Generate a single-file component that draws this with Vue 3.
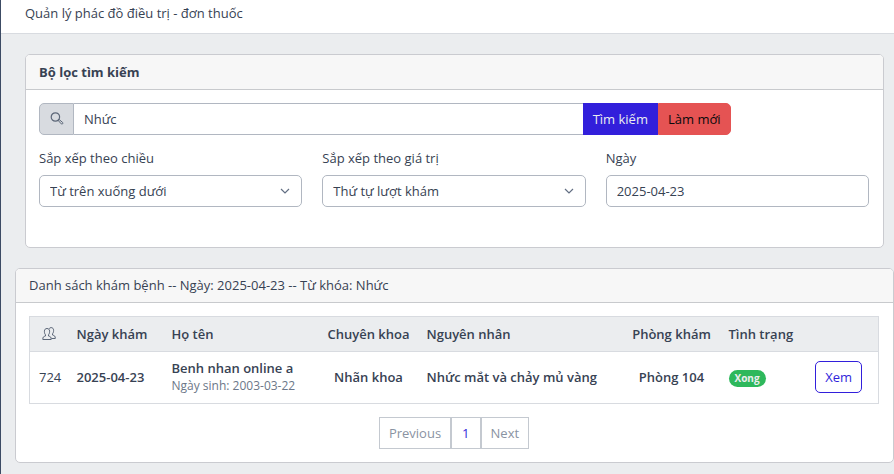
<script setup>
import { ref } from 'vue'

const keyword = ref('Nhức')
const direction = ref('desc')
const sortBy = ref('order')
const date = ref('2025-04-23')

const visits = [
  {
    id: 724,
    date: '2025-04-23',
    name: 'Benh nhan online a',
    birthday: '2003-03-22',
    specialty: 'Nhãn khoa',
    reason: 'Nhức mắt và chảy mủ vàng',
    room: 'Phòng 104',
    status: 'Xong',
  },
]
</script>

<template>
  <div class="page">
    <header class="topbar">Quản lý phác đồ điều trị - đơn thuốc</header>
    <main class="content">
      <section class="card filter">
        <h2 class="card-header strong">Bộ lọc tìm kiếm</h2>
        <form class="filter-body" @submit.prevent>
          <div class="search">
            <label class="addon" for="keyword" aria-label="Từ khóa">
              <svg width="14" height="14" viewBox="0 0 14 14" fill="none" stroke="currentColor">
                <circle cx="5.4" cy="5" r="4.2" stroke-width="1.2" />
                <path d="M8.1 8.200l.9-.8 3.700 3.100c.8.8-.5 2.200-1.400 1.400L8 8.300" />
              </svg>
            </label>
            <input id="keyword" v-model="keyword" class="control" type="text" />
            <button class="btn primary" type="submit">Tìm kiếm</button>
            <button class="btn danger" type="reset">Làm mới</button>
          </div>
          <div class="fields">
            <div class="field">
              <label for="direction">Sắp xếp theo chiều</label>
              <div class="select">
                <select id="direction" v-model="direction" class="control">
                  <option value="desc">Từ trên xuống dưới</option>
                  <option value="asc">Từ dưới lên trên</option>
                </select>
                <svg class="chevron" width="10" height="10" viewBox="0 0 10 10" fill="none" stroke="currentColor">
                  <path d="M1 3l4 4 4-4" stroke-width="1.2" />
                </svg>
              </div>
            </div>
            <div class="field">
              <label for="sort-by">Sắp xếp theo giá trị</label>
              <div class="select">
                <select id="sort-by" v-model="sortBy" class="control">
                  <option value="order">Thứ tự lượt khám</option>
                  <option value="date">Ngày khám</option>
                </select>
                <svg class="chevron" width="10" height="10" viewBox="0 0 10 10" fill="none" stroke="currentColor">
                  <path d="M1 3l4 4 4-4" stroke-width="1.2" />
                </svg>
              </div>
            </div>
            <div class="field">
              <label for="date">Ngày</label>
              <input id="date" v-model="date" class="control" type="text" />
            </div>
          </div>
        </form>
      </section>

      <section class="card results">
        <h2 class="card-header">Danh sách khám bệnh -- Ngày: {{ date }} -- Từ khóa: {{ keyword }}</h2>
        <div class="results-body">
          <table>
            <colgroup>
              <col class="w-id" />
              <col class="w-date" />
              <col class="w-name" />
              <col class="w-specialty" />
              <col />
              <col class="w-room" />
              <col class="w-status" />
              <col class="w-action" />
            </colgroup>
            <thead>
              <tr>
                <th class="center">
                  <svg class="people" width="14" height="14" viewBox="0 0 14 14" fill="none" stroke="currentColor" stroke-linejoin="round">
                    <path d="M.8 12.500c0-2.600.6-2.900 2.700-3.500V7.800C2.600 6.800 2.400 5.800 2.400 4.200 2.400 2.500 3.500 1.500 5 1.500s2.600 1 2.600 2.700c0 1.600-.2 2.600-1.100 3.600V9c2.100.6 2.700.9 2.700 3.500z" />
                    <path d="M7.200 1.600C7.600 1 8.300.6 9.100.6c1.500 0 2.500 1 2.500 2.700 0 1.500-.2 2.500-1.100 3.500V8c2.100.7 2.800 1 2.800 3.500H9.500" />
                  </svg>
                </th>
                <th>Ngày khám</th>
                <th>Họ tên</th>
                <th class="center">Chuyên khoa</th>
                <th>Nguyên nhân</th>
                <th class="center">Phòng khám</th>
                <th>Tình trạng</th>
                <th></th>
              </tr>
            </thead>
            <tbody>
              <tr v-for="visit in visits" :key="visit.id">
                <td class="id">{{ visit.id }}</td>
                <td>{{ visit.date }}</td>
                <td>
                  <div class="name">{{ visit.name }}</div>
                  <div class="birthday">Ngày sinh: {{ visit.birthday }}</div>
                </td>
                <td class="center">{{ visit.specialty }}</td>
                <td>{{ visit.reason }}</td>
                <td class="center">{{ visit.room }}</td>
                <td><span class="badge">{{ visit.status }}</span></td>
                <td class="center"><button class="btn outline" type="button">Xem</button></td>
              </tr>
            </tbody>
          </table>
          <nav class="pagination" aria-label="Phân trang">
            <button type="button" disabled>Previous</button>
            <button type="button" class="current">1</button>
            <button type="button" disabled>Next</button>
          </nav>
        </div>
      </section>
    </main>
  </div>
</template>

<style>
body {
  margin: 0;
  background: #ebedef;
}
</style>

<style scoped>
* {
  box-sizing: border-box;
}

.page {
  min-height: 100vh;
  border-left: 1px solid #3c4b64;
  background: #ebedef;
  color: #374253;
  font-family: "Segoe UI", "Open Sans", "Noto Sans", sans-serif;
  font-size: 13px;
  line-height: 20px;
}

.topbar {
  height: 34px;
  padding: 3px 24px;
  border-bottom: 1px solid #d8dbe0;
  background: #fff;
}

.content {
  display: flex;
  flex-direction: column;
  gap: 20px;
  padding: 20px 0 11px 14px;
}

.card {
  overflow: hidden;
  border: 1px solid #cacbd0;
  border-radius: 5px;
  background: #fff;
}

.filter {
  margin: 0 10px;
}

.card-header {
  margin: 0;
  padding: 6px 13px 7px;
  border-bottom: 1px solid #c8cacd;
  background: #f7f7f7;
  font-size: 13px;
  font-weight: 400;
}

.card-header.strong {
  padding-top: 7px;
  font-weight: 700;
}

.filter-body {
  padding: 13px 14px 40px 13px;
}

.search {
  display: flex;
  width: calc(100% * 5 / 6);
}

.control,
.btn {
  height: 32px;
  margin: 0;
  padding: 0 10px;
  border: 1px solid #b1b7c1;
  border-radius: 5px;
  background: #fff;
  color: inherit;
  font: inherit;
}

.control {
  width: 100%;
  min-width: 0;
  appearance: none;
}

.addon {
  display: flex;
  flex: none;
  align-items: center;
  justify-content: center;
  width: 35px;
  border: 1px solid #b1b7c1;
  border-radius: 5px 0 0 5px;
  background: #d8dbe0;
  color: #5c6778;
}

.search .control {
  flex: 1;
  border-right: 0;
  border-left: 0;
  border-radius: 0;
}

.btn {
  flex: none;
  padding: 0 9px;
  white-space: nowrap;
}

.btn.primary {
  border-color: #321fdb;
  border-radius: 0;
  background: #321fdb;
  color: #ebedef;
}

.btn.danger {
  border-color: #e55353;
  border-radius: 0 5px 5px 0;
  background: #e55353;
  color: #080a0c;
}

.btn.outline {
  border-color: #321fdb;
  color: #321fdb;
  font-weight: 400;
}

.fields {
  display: grid;
  grid-template-columns: repeat(3, 1fr);
  gap: 20px;
  margin-top: 13px;
}

.field label {
  display: block;
  margin-bottom: 7px;
}

.select {
  position: relative;
}

.chevron {
  position: absolute;
  top: 11px;
  right: 12px;
  color: #636f83;
  pointer-events: none;
}

.results-body {
  padding: 13px 14px 13px 13px;
}

table {
  width: 100%;
  border: 1px solid #d8dbe0;
  border-collapse: collapse;
  table-layout: fixed;
}

.w-id {
  width: 38px;
}

.w-date {
  width: 95px;
}

.w-name {
  width: 157px;
}

.w-specialty {
  width: 98px;
}

.w-room {
  width: 96px;
}

.w-status {
  width: 80px;
}

.w-action {
  width: 79px;
}

th,
td {
  padding: 7px 0 7px 9px;
  border-bottom: 1px solid #d8dbe0;
  font-weight: 600;
  text-align: left;
  vertical-align: middle;
  white-space: nowrap;
}

th {
  background: #ebedef;
}

td {
  height: 52px;
  padding-top: 6px;
  padding-bottom: 8px;
}

.center {
  padding-right: 0;
  padding-left: 0;
  text-align: center;
}

td.id {
  font-weight: 400;
}

.people {
  display: block;
  margin: 0 auto;
  color: #5c6778;
}

.name,
.birthday {
  line-height: 18px;
}

.birthday {
  color: #6c7788;
  font-size: 12px;
  font-weight: 400;
}

.badge {
  display: inline-block;
  padding: 0 6px;
  border-radius: 9px;
  background: #2eb85c;
  color: #ebedef;
  font-size: 10px;
  font-weight: 700;
  line-height: 17px;
  vertical-align: middle;
}

.pagination {
  display: flex;
  justify-content: center;
  margin-top: 13px;
}

.pagination button {
  height: 32px;
  padding: 0 9px;
  border: 1px solid #c4c9d0;
  background: #fff;
  color: #8a93a2;
  font: inherit;
}

.pagination .current {
  padding: 0 10px;
  color: #321fdb;
}
</style>
